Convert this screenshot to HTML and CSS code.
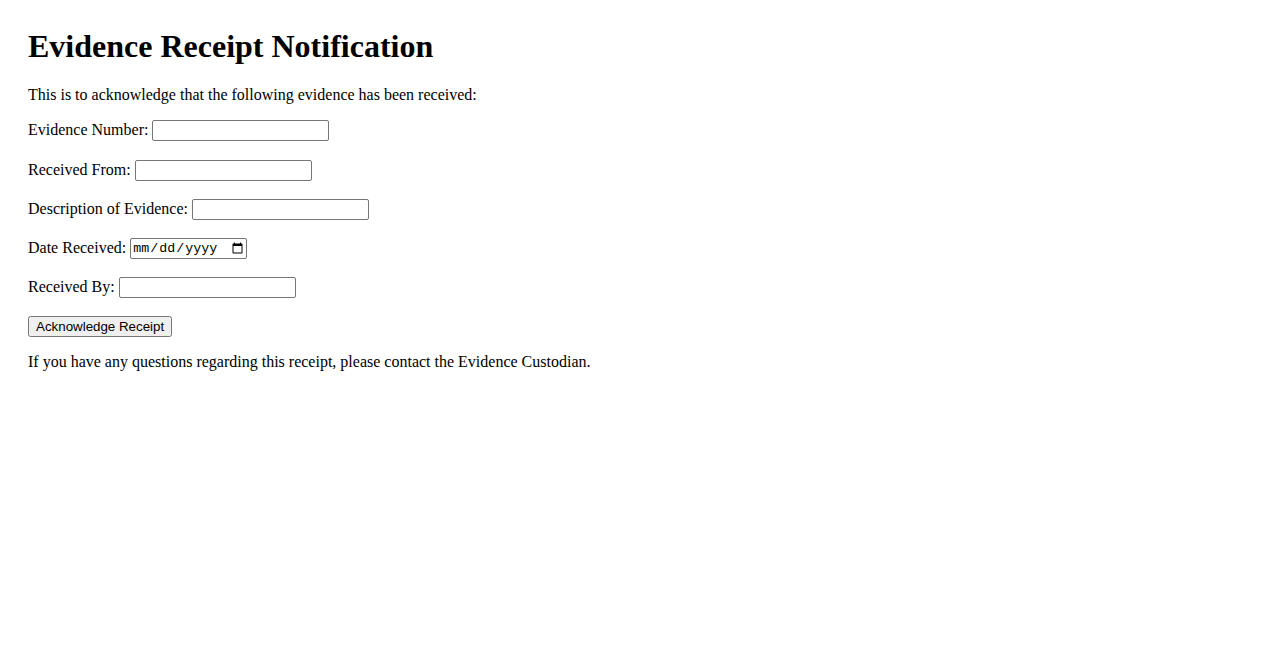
FILE: index.html
```html
<!DOCTYPE html>
<html lang="en">
<head>
  <meta charset="UTF-8" />
  <meta name="viewport" content="width=device-width, initial-scale=1.0" />
  <title>Evidence Receipt Notification</title>
  <link rel="stylesheet" href="styles.css">
</head>
<body>
  <h1 class="page-title">Evidence Receipt Notification</h1>
  <p class="intro">This is to acknowledge that the following evidence has been received:</p>

  <form class="receipt-form">
    <div class="form-row">
      <label for="evidence-number">Evidence Number:</label>
      <input type="text" id="evidence-number" name="evidence-number">
    </div>
    <div class="form-row">
      <label for="received-from">Received From:</label>
      <input type="text" id="received-from" name="received-from">
    </div>
    <div class="form-row">
      <label for="description">Description of Evidence:</label>
      <input type="text" id="description" name="description">
    </div>
    <div class="form-row">
      <label for="date-received">Date Received:</label>
      <input type="date" id="date-received" name="date-received" class="date-input">
    </div>
    <div class="form-row">
      <label for="received-by">Received By:</label>
      <input type="text" id="received-by" name="received-by">
    </div>
    <div class="form-row form-row-last">
      <button type="button" class="submit-btn">Acknowledge Receipt</button>
    </div>
  </form>

  <p class="footer-note">If you have any questions regarding this receipt, please contact the Evidence Custodian.</p>
</body>
</html>
```

FILE: styles.css
```css
body {
  margin: 0;
  padding: 28px;
  font-family: "Liberation Serif", "Times New Roman", serif;
  font-size: 16px;
  color: #000;
  background-color: #fff;
}

.page-title {
  font-size: 2em;
  font-weight: bold;
  margin: 0 0 21.44px 0;
}

.intro {
  margin: 0 0 16px 0;
}

.form-row {
  height: 22px;
  margin-bottom: 17.2px;
}

.form-row-last {
  margin-bottom: 15px;
}

.form-row input,
.submit-btn {
  font-family: "Liberation Sans", Arial, sans-serif;
  font-size: 13.33px;
}

.form-row input[type="text"] {
  box-sizing: border-box;
  width: 177px;
  height: 21px;
  border: 1px solid #767676;
  border-radius: 2px;
}

.date-input {
  box-sizing: border-box;
  width: 117px;
  height: 21px;
  vertical-align: 1px;
  font-family: "Liberation Mono", "Courier New", monospace !important;
  font-size: 13.33px !important;
  border: 1px solid #767676;
  border-radius: 2px;
}

.footer-note {
  margin: 0;
}
```
